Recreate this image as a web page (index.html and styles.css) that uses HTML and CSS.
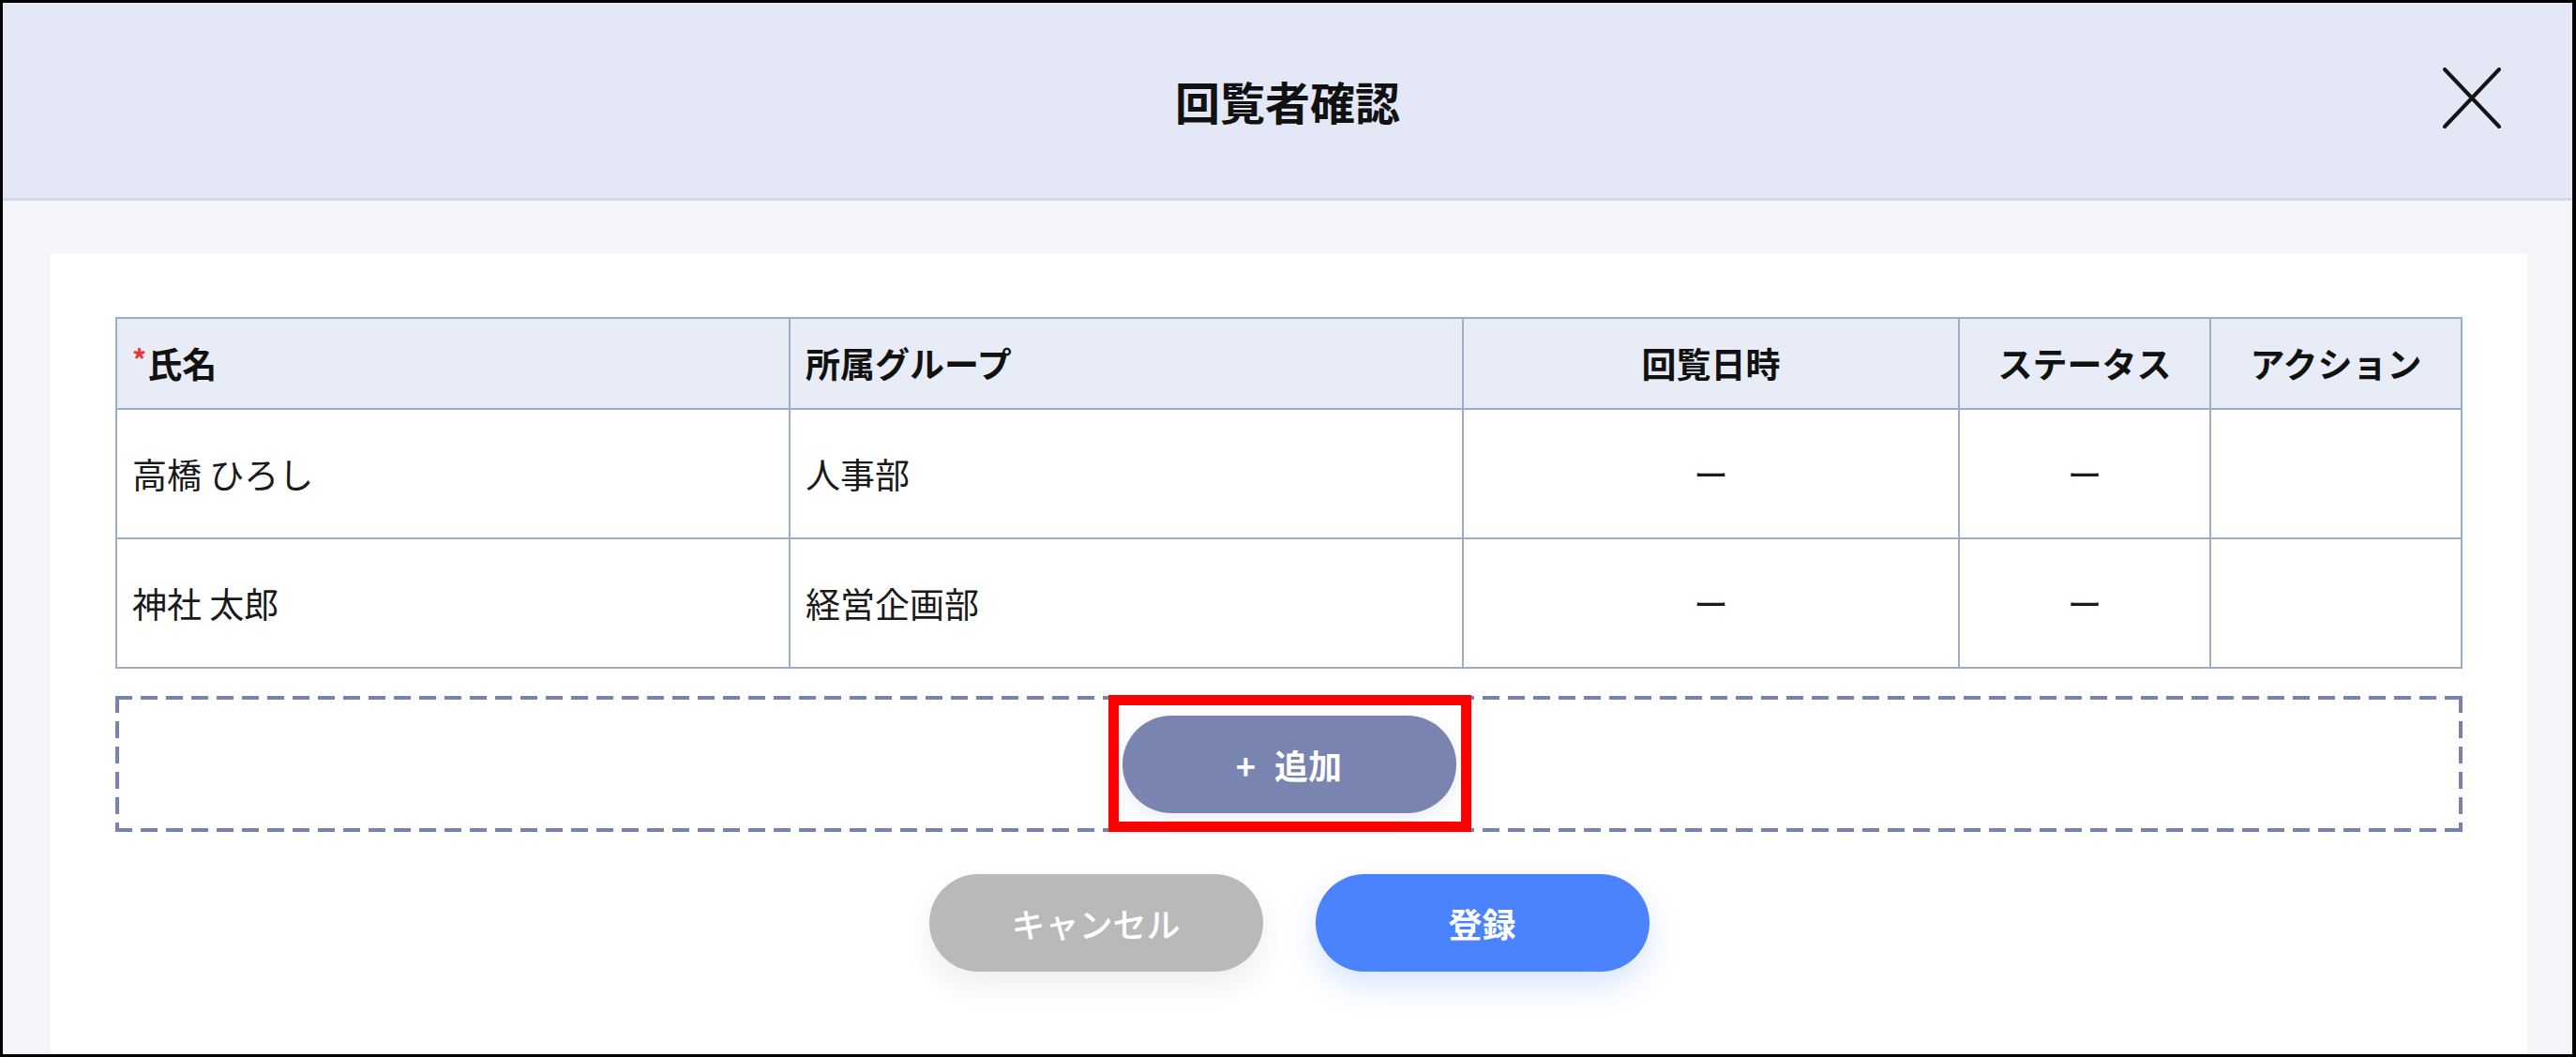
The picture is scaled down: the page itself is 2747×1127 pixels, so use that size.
FILE: index.html
```html
<!DOCTYPE html>
<html>
  <head>
    <meta charset="utf-8">
    <meta name="viewport" content="width=device-width, initial-scale=1">
    <title>回覧者確認</title>
    <link rel="stylesheet" href="styles.css">
  </head>
  <body>
    <div class="window">
      <!-- ヘッダー -->
      <header class="dialog-head">
        <span class="head-side"></span>
        <h1 class="dialog-title">回覧者確認</h1>
        <button type="button" class="btn-close" aria-label="閉じる">
          <svg width="62" height="65" viewBox="0 0 62 65" fill="none" stroke="#151515" stroke-width="4" stroke-linecap="round">
            <line x1="2" y1="2" x2="60" y2="63"/>
            <line x1="60" y1="2" x2="2" y2="63"/>
          </svg>
        </button>
      </header>

      <div class="dialog-body">
        <div class="card">
          <!-- 回覧者一覧 -->
          <table class="viewer-table">
            <colgroup>
              <col class="col-name">
              <col class="col-group">
              <col class="col-date">
              <col class="col-status">
              <col class="col-action">
            </colgroup>
            <thead>
              <tr>
                <th><span class="req">*</span>氏名</th>
                <th>所属グループ</th>
                <th class="text-center">回覧日時</th>
                <th class="text-center">ステータス</th>
                <th class="text-center">アクション</th>
              </tr>
            </thead>
            <tbody>
              <tr>
                <td>高橋 ひろし</td>
                <td>人事部</td>
                <td class="text-center">ー</td>
                <td class="text-center">ー</td>
                <td></td>
              </tr>
              <tr>
                <td>神社 太郎</td>
                <td>経営企画部</td>
                <td class="text-center">ー</td>
                <td class="text-center">ー</td>
                <td></td>
              </tr>
            </tbody>
          </table>

          <!-- 追加 -->
          <div class="add-area">
            <div class="add-wrap">
              <button type="button" class="btn btn-add"><span class="plus">+</span><span>追加</span></button>
              <span class="mark"></span>
            </div>
          </div>

          <div class="actions">
            <button type="button" class="btn btn-cancel">キャンセル</button>
            <button type="button" class="btn btn-submit">登録</button>
          </div>
        </div>
      </div>
    </div>
  </body>
</html>
```

FILE: styles.css
```css
html,body{margin:0;padding:0}
body{font-family:"Noto Sans CJK JP","Noto Sans",sans-serif;color:#1a1a1a;font-size:37px;line-height:1.3}
*{box-sizing:border-box}
button{font-family:inherit;margin:0;cursor:pointer}

.window{display:flex;flex-direction:column;width:2747px;height:1127px;border:3px solid #000;border-right-width:4px;background:#f4f5f9;overflow:hidden}

/* header */
.dialog-head{display:grid;grid-template-columns:1fr auto 1fr;align-items:center;height:211px;flex:0 0 auto;background:#e4e8f6;border-bottom:3px solid #d3d6ee}
.dialog-title{margin:0;font-size:48px;font-weight:700;color:#111;letter-spacing:0}
.btn-close{justify-self:end;display:flex;padding:0;margin-right:76px;margin-top:-6px;border:0;background:none}

/* body */
.dialog-body{flex:1 1 auto;display:flex;padding:56px 51px 0}
.card{flex:1 1 auto;background:#fff;padding:68px 69px 0}

.viewer-table{width:100%;border-collapse:collapse;table-layout:fixed}
.col-name{width:718px}
.col-group{width:718px}
.col-date{width:529px}
.col-status{width:268px}
.col-action{width:268px}
.viewer-table th,.viewer-table td{border:2px solid #9dacc8;padding:0 16px;text-align:left;white-space:nowrap}
.viewer-table th{height:97px;background:#e7ecf6;font-weight:700;color:#111}
.viewer-table td{height:138px;font-weight:400}
.viewer-table .text-center{text-align:center}
.req{display:inline-block;color:#f0302c;font-size:30px;font-weight:700;line-height:1;vertical-align:top;margin:4px 1px 0 0}

/* dashed add area */
.add-area{display:flex;justify-content:center;align-items:center;height:145px;margin-top:29px;
  background:
    linear-gradient(to right,#7882ae 18px,transparent 18px) left top/27px 4px repeat-x,
    linear-gradient(to right,#7882ae 18px,transparent 18px) left bottom/27px 4px repeat-x,
    linear-gradient(to bottom,#7882ae 18px,transparent 18px) left top/4px 27px repeat-y,
    linear-gradient(to bottom,#7882ae 18px,transparent 18px) right top/4px 27px repeat-y;
  padding-top:1px}
.add-wrap{position:relative;display:flex}
.mark{position:absolute;top:-22px;left:-15px;right:-16px;bottom:-20px;border:11px solid #ff0000;pointer-events:none}

.btn{display:flex;align-items:center;justify-content:center;width:356px;height:104px;border:0;border-radius:52px;color:#fff;font-size:36px;line-height:1;white-space:nowrap}
.btn-add{gap:20px;background:#7a84b0;font-weight:700;box-shadow:0 6px 18px rgba(122,132,176,.15)}
.btn-add .plus{font-weight:700}

.actions{display:flex;justify-content:center;gap:56px;margin-top:45px}
.btn-cancel{background:#b9b9b9;font-weight:500;box-shadow:0 14px 34px rgba(0,0,0,.07)}
.btn-submit{background:#4a83fd;font-weight:700;box-shadow:0 14px 34px rgba(74,131,253,.22)}
```
